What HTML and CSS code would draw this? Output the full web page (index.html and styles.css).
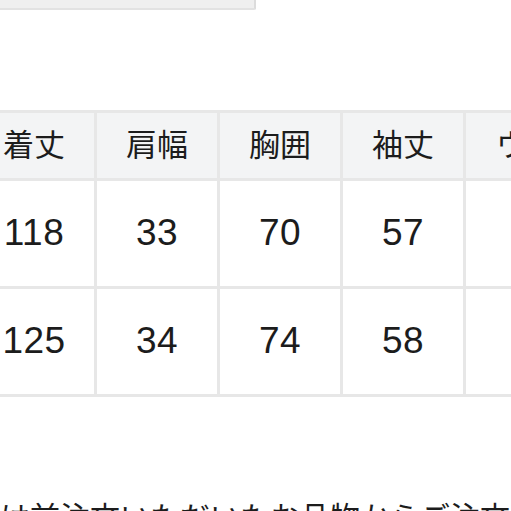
FILE: index.html
```html
<!DOCTYPE html>
<html lang="ja">
<head>
<meta charset="utf-8">
<link rel="stylesheet" href="styles.css">
</head>
<body>
<div class="page">
  <div class="topbox"></div>
  <div class="table-wrap">
    <table class="size-table">
      <colgroup>
        <col class="c">
        <col class="c">
        <col class="c">
        <col class="c">
        <col class="cw">
      </colgroup>
      <thead>
        <tr>
          <th>着丈</th>
          <th>肩幅</th>
          <th>胸囲</th>
          <th>袖丈</th>
          <th>ウエスト</th>
        </tr>
      </thead>
      <tbody>
        <tr>
          <td>118</td>
          <td>33</td>
          <td>70</td>
          <td>57</td>
          <td></td>
        </tr>
        <tr>
          <td>125</td>
          <td>34</td>
          <td>74</td>
          <td>58</td>
          <td></td>
        </tr>
      </tbody>
    </table>
  </div>
  <p class="note">は前注文いただいたお品物からご注文の商品</p>
</div>
</body>
</html>
```
FILE: styles.css
```css
html, body {
  margin: 0;
  padding: 0;
  background: #ffffff;
}
.page {
  width: 511px;
  height: 511px;
  overflow: hidden;
  font-family: "Liberation Sans", "Noto Sans CJK JP", sans-serif;
  color: #1c1c1c;
}
.topbox {
  width: 254px;
  height: 8px;
  background: #efefef;
  border-right: 2px solid #dcdcdc;
  border-bottom: 2px solid #e2e2e2;
  border-bottom-right-radius: 2px;
}
.table-wrap {
  margin-top: 100px;
  width: 511px;
  overflow: hidden;
}
.size-table {
  width: 682px;
  min-width: 682px;
  margin-left: -29px;
  border-collapse: separate;
  border-spacing: 3px;
  background: #e7e7e7;
  table-layout: fixed;
}
.size-table col.c {
  width: 120px;
}
.size-table col.cw {
  width: 184px;
}
.size-table th,
.size-table td {
  padding: 0;
  text-align: center;
  vertical-align: middle;
  white-space: nowrap;
  overflow: hidden;
}
.size-table th {
  height: 59px;
  padding-bottom: 6px;
  background: #f3f4f5;
  font-family: "Noto Sans CJK JP", sans-serif;
  font-weight: 400;
  font-size: 31px;
  line-height: 1;
}
.size-table td {
  height: 103px;
  padding-bottom: 2px;
  background: #ffffff;
  font-size: 37px;
  line-height: 1;
  letter-spacing: 0.5px;
}
.note {
  margin: 0;
  margin-top: 98px;
  white-space: nowrap;
  font-family: "Noto Sans CJK JP", sans-serif;
  font-size: 30px;
  line-height: 40px;
  color: #1c1c1c;
}
```
